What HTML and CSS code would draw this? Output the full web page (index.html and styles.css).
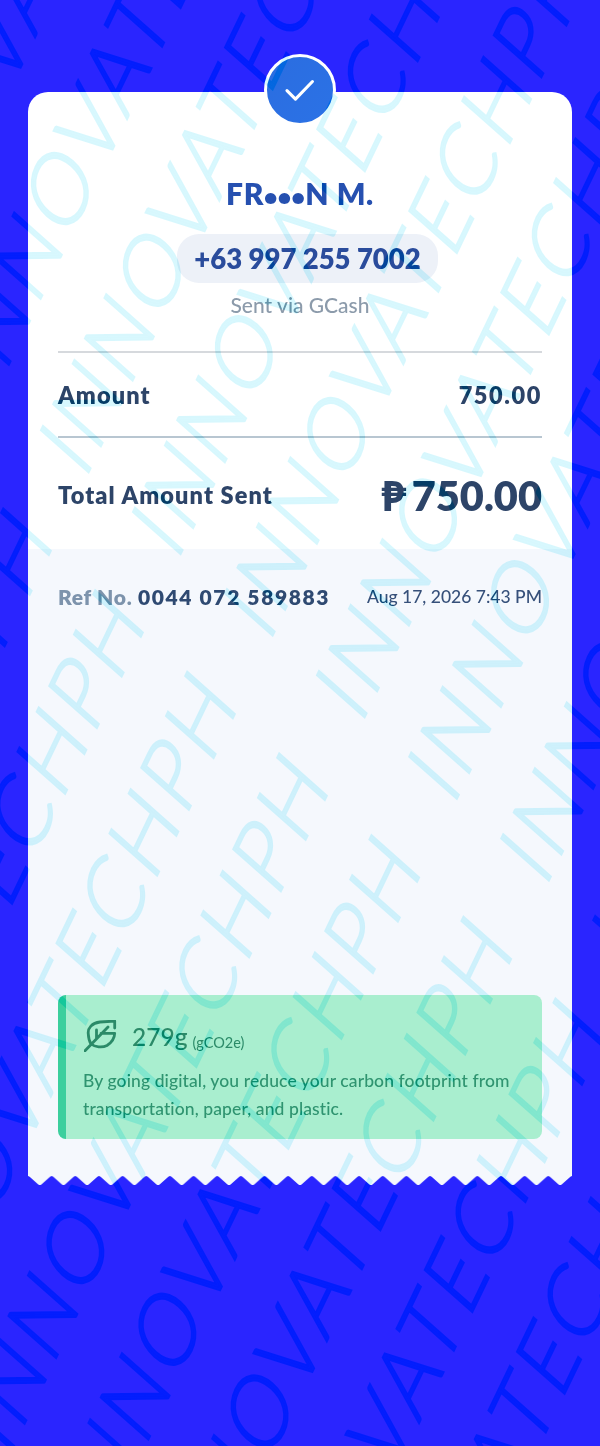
FILE: index.html
```html
<!DOCTYPE html>
<html lang="en">
<head>
<meta charset="utf-8">
<title>Receipt</title>
<link rel="stylesheet" href="styles.css">
</head>
<body>
<div class="page">
  <main class="card">
    <div class="badge">
      <svg class="check" viewBox="0 0 30 30" width="34" height="34"><path d="M3.5 15.5 L11 23 L26 7.5" fill="none" stroke="#fff" stroke-width="2.7" stroke-linecap="round" stroke-linejoin="round"/></svg>
    </div>
    <section class="top">
      <h1 class="name">FR<span class="dots">•••</span>N M.</h1>
      <div class="pill">+63 997 255 7002</div>
      <p class="via">Sent via GCash</p>
      <div class="row row-amount"><span>Amount</span><span class="num">750.00</span></div>
      <div class="row row-total"><span>Total Amount Sent</span><span class="big"><span class="peso">₱</span>750.00</span></div>
    </section>
    <section class="bottom">
      <div class="meta">
        <span class="ref"><span class="ref-label">Ref No.</span> <span class="ref-num">0044 072 589883</span></span>
        <span class="date">Aug 17, 2026 7:43 PM</span>
      </div>
      <div class="eco">
        <div class="eco-head">
          <svg class="leaf" viewBox="0 0 34 32" width="34" height="32"><path d="M1 30.7 L24 7 M12.5 10 V18 M30.7 8 V1 L16 2 C8 3 3.5 8 4.3 14 C4.5 18 5 21 7 24 C11 27 18 28 23 25.5 C27 23 30.5 19 30.7 13.3 H17" fill="none" stroke="#2b8a68" stroke-width="2.8" stroke-linecap="round" stroke-linejoin="round"/></svg>
          <span class="grams">279g</span>
          <span class="unit">(gCO2e)</span>
        </div>
        <p class="eco-text">By going digital, you reduce your carbon footprint from transportation, paper, and plastic.</p>
      </div>
    </section>
    <svg class="teeth" width="544" height="10" viewBox="0 0 544 10" preserveAspectRatio="none">
      <defs><pattern id="zig" width="23.65" height="10" patternUnits="userSpaceOnUse"><path d="M0 0 H23.65 V1 C23.65 1 22.8 1 21.8 2 L13.4 9.4 C12.4 10.2 11.3 10.2 10.3 9.4 L1.9 2 C0.9 1 0 1 0 1 Z" fill="#f5f8fd"/></pattern></defs>
      <rect width="544" height="10" fill="url(#zig)"/>
    </svg>
  </main>
  <div class="wm" aria-hidden="true">
    <div>INNOVATECHPH INNOVATECHPH INNOVATECHPH INNOVATECHPH</div>
    <div>INNOVATECHPH INNOVATECHPH INNOVATECHPH INNOVATECHPH</div>
    <div>INNOVATECHPH INNOVATECHPH INNOVATECHPH INNOVATECHPH</div>
    <div>INNOVATECHPH INNOVATECHPH INNOVATECHPH INNOVATECHPH</div>
    <div>INNOVATECHPH INNOVATECHPH INNOVATECHPH INNOVATECHPH</div>
    <div>INNOVATECHPH INNOVATECHPH INNOVATECHPH INNOVATECHPH</div>
    <div>INNOVATECHPH INNOVATECHPH INNOVATECHPH INNOVATECHPH</div>
    <div>INNOVATECHPH INNOVATECHPH INNOVATECHPH INNOVATECHPH</div>
    <div>INNOVATECHPH INNOVATECHPH INNOVATECHPH INNOVATECHPH</div>
    <div>INNOVATECHPH INNOVATECHPH INNOVATECHPH INNOVATECHPH</div>
    <div>INNOVATECHPH INNOVATECHPH INNOVATECHPH INNOVATECHPH</div>
    <div>INNOVATECHPH INNOVATECHPH INNOVATECHPH INNOVATECHPH</div>
  </div>
</div>
</body>
</html>
```
FILE: styles.css
```css
* { box-sizing: border-box; margin: 0; padding: 0; }
html, body { width: 600px; height: 1446px; overflow: hidden; }
body { font-family: Lato, "Noto Sans", sans-serif; }

.page {
  position: relative;
  width: 600px;
  height: 1446px;
  overflow: hidden;
  isolation: isolate;
  background: #2a25ff;
  padding: 92px 28px 0;
}

.card {
  position: relative;
  display: flex;
  flex-direction: column;
  height: 1093px;
}

.badge {
  position: absolute;
  top: -38px;
  left: 236px;
  width: 72px;
  height: 72px;
  border-radius: 50%;
  border: 3px solid #fff;
  background: linear-gradient(135deg, #2b6de0, #2b72e6);
  display: flex;
  align-items: center;
  justify-content: center;
}

.top {
  background: #fff;
  border-radius: 20px 20px 0 0;
  padding: 83px 30px 0;
  height: 457px;
  display: flex;
  flex-direction: column;
  align-items: center;
}

.name {
  height: 36px;
  font-size: 30px;
  line-height: 36px;
  font-weight: 800;
  color: #2650b0;
  letter-spacing: 0.6px;
}

.dots { font-size: 23px; line-height: 1; letter-spacing: 0.4px; }

.pill {
  margin: 23px 0 0 15px;
  width: 261px;
  height: 49px;
  border-radius: 22px;
  background: #edf1f8;
  color: #2a4c9c;
  font-size: 27.5px;
  font-weight: 800;
  line-height: 49px;
  text-align: center;
}

.via {
  margin-top: 8px;
  font-size: 21px;
  line-height: 28px;
  font-weight: 500;
  color: #8c9bab;
}

.row {
  align-self: stretch;
  display: flex;
  justify-content: space-between;
  align-items: center;
  color: #2d4468;
  font-weight: 800;
  font-size: 23.5px;
  letter-spacing: 1.1px;
}

.row-amount {
  margin-top: 32px;
  height: 87px;
  border-top: 2px solid #d6d9dd;
  border-bottom: 2px solid #b8c6d1;
}

.num { letter-spacing: 1.6px; }

.row-total {
  height: 111px;
  padding-top: 3px;
}

.big {
  font-size: 41.5px;
  font-weight: 800;
  letter-spacing: 0;
}

.peso { margin-right: 6px; }

.bottom {
  flex: 1;
  background: #f5f8fd;
  padding: 32px 30px 0;
}

.meta {
  display: flex;
  justify-content: space-between;
  align-items: center;
  height: 30px;
}

.ref {
  font-size: 21px;
  font-weight: 800;
  letter-spacing: 0.7px;
  color: #2f4a72;
}

.ref-label { color: #7d93ac; }

.ref-num { letter-spacing: 1.6px; }

.date {
  font-size: 17.5px;
  font-weight: 500;
  color: #36507a;
}

.eco {
  margin-top: 384px;
  height: 144px;
  background: #a9eecf;
  border-left: 8px solid #3ccf9d;
  border-radius: 8px;
  padding: 23px 16px 0 17px;
}

.eco-head {
  display: flex;
  align-items: center;
  height: 36px;
}

.leaf { margin: 0 14px 0 1px; }

.grams {
  font-size: 24.5px;
  font-weight: 500;
  color: #2b8a68;
}

.unit {
  margin: 13px 0 0 5px;
  font-size: 14.5px;
  color: #2b8a68;
}

.eco-text {
  margin-top: 13px;
  font-size: 17.5px;
  font-weight: 500;
  letter-spacing: 0.1px;
  line-height: 28px;
  color: #2f9470;
}

.teeth { display: block; flex: none; }

.wm {
  position: absolute;
  top: 0;
  left: 0;
  transform-origin: 0 0;
  transform: matrix(0.389, -0.808, 0.672, 0.596, -969, 1637);
  mix-blend-mode: difference;
  pointer-events: none;
  white-space: nowrap;
  font-family: Lato, sans-serif;
  font-size: 100px;
  font-weight: 300;
  line-height: 137px;
  letter-spacing: 6px;
  word-spacing: 37px;
  color: rgb(40, 8, 2);
  -webkit-text-stroke: 2.5px rgb(40, 8, 2);
}
```
